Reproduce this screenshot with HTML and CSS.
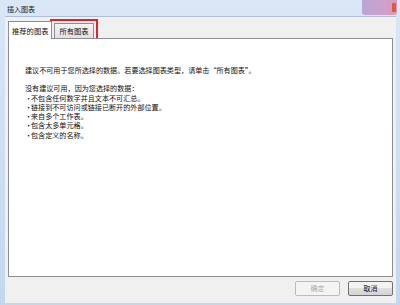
FILE: index.html
```html
<!DOCTYPE html>
<html>
  <head>
    <meta charset="utf-8">
    <title>插入图表</title>
    <link rel="stylesheet" href="styles.css">
  </head>
  <body>
    <div class="window">
      <div class="titlebar">
        <span class="title">插入图表</span>
        <div class="close"><span class="closeend"></span></div>
      </div>
      <div class="client">
        <div class="tabs">
          <div class="tab active">推荐的图表</div>
          <div class="tab marked">所有图表</div>
        </div>
        <div class="panel">
          <p class="para">建议不可用于您所选择的数据。若要选择图表类型，请单击“所有图表”。</p>
          <p class="para">没有建议可用，因为您选择的数据：</p>
          <ul class="reasons">
            <li><span class="dot">•</span>不包含任何数字并且文本不可汇总。</li>
            <li><span class="dot">•</span>链接到不可访问或链接已断开的外部位置。</li>
            <li><span class="dot">•</span>来自多个工作表。</li>
            <li><span class="dot">•</span>包含太多单元格。</li>
            <li><span class="dot">•</span>包含定义的名称。</li>
          </ul>
        </div>
        <div class="buttons">
          <button class="btn" disabled>确定</button>
          <button class="btn">取消</button>
        </div>
      </div>
    </div>
  </body>
</html>
```

FILE: styles.css
```css
body        {margin:0; background:#c9dbf0;
             font-family:"Noto Sans CJK SC","Liberation Sans",sans-serif; color:#111;}

.window     {width:400px; height:305px; box-sizing:border-box;
             background:linear-gradient(#d9e7f6,#c3d7ee);
             display:flex; flex-direction:column;
             padding:0 4px 2px 5px;}

/* title bar */
.titlebar   {height:16px; display:flex; align-items:flex-start; position:relative;}
.title      {font-size:7px; line-height:7px; margin-top:6px; margin-left:2px; color:#222;}
.close      {position:absolute; right:-1px; top:0; width:35px; height:15px;
             background:linear-gradient(90deg,#b8a6d6,#cfa0c8 70%,#d89ab4);
             border-radius:0 0 3px 3px;}
.closeend   {position:absolute; right:1px; top:3px; width:4px; height:9px;
             background:#e2583a; border-radius:1px;}

/* client area */
.client     {flex:1; background:#f0f0f0; display:flex; flex-direction:column;
             padding:3px 3px 0 3px; border-top:1px solid #aebfd6;}

.tabs       {display:flex; align-items:flex-end; height:18px; padding-left:0;}
.tab        {font-size:7.3px; line-height:14px; height:14px; padding:0 4px;
             border:1px solid #8c8e94; border-bottom:none; background:linear-gradient(#f4f4f4,#e2e2e2);
             margin-bottom:0;}
.tab.active {height:17px; line-height:18px; background:#fff; position:relative; z-index:1;
             margin-bottom:-1px; padding:0 3px;}
.tab.marked {margin-left:2px; outline:2px solid #e0232b; outline-offset:2px;}

.panel      {height:239px; background:#fff; border:1px solid #8c8e94;
             padding:27px 16px 0 16px; box-sizing:border-box; font-size:7.1px; line-height:9.3px;}
.para       {margin:0 0 9px 0;}
.reasons    {list-style:none; margin:-9px 0 0 0; padding:0;}
.dot        {display:inline-block; width:6px;}

/* bottom buttons */
.buttons    {display:flex; justify-content:flex-end; gap:8px; padding:4px 0 0 0;}
.btn        {width:45px; height:15px; padding:0; font-family:inherit; font-size:7px; line-height:7px;
             border:1px solid #707070; border-radius:2px; color:#111;
             background:linear-gradient(#f3f3f3 50%,#dedede 50%,#d4d4d4);}
.btn:disabled {color:#a8a8a8; border-color:#b8bcc0; background:#f4f4f4;}
```
